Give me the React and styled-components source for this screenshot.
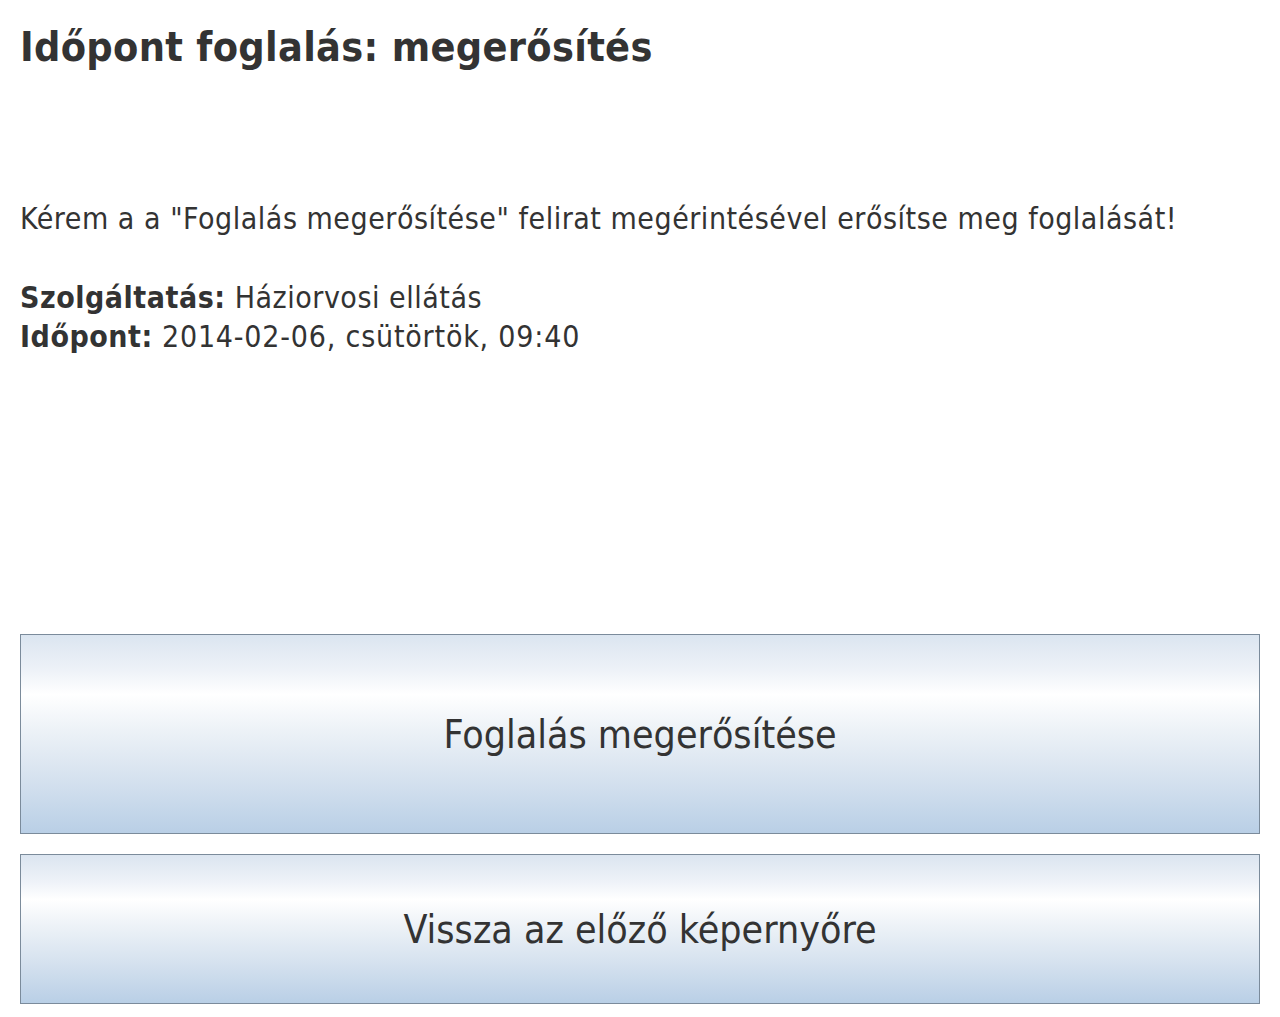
import React from 'react';
import styled, { createGlobalStyle } from 'styled-components';

const GlobalStyle = createGlobalStyle`
    html, body {
        margin: 0;
        padding: 0;
        background: #fff;
    }
    body {
        font-family: Tahoma, "DejaVu Sans", Verdana, sans-serif;
        font-stretch: condensed;
        color: #333;
    }
`;

const booking = {
    service: 'Háziorvosi ellátás',
    time: '2014-02-06, csütörtök, 09:40',
};

const App = () => {
    return (
        <Page>
            <GlobalStyle />
            <Title>Időpont foglalás: megerősítés</Title>
            <Intro>Kérem a a "Foglalás megerősítése" felirat megérintésével erősítse meg foglalását!</Intro>
            <Details>
                <DetailRow><Label>Szolgáltatás:</Label> {booking.service}</DetailRow>
                <DetailRow><Label>Időpont:</Label> <Value>{booking.time}</Value></DetailRow>
            </Details>
            <Actions>
                <BigButton tall>Foglalás megerősítése</BigButton>
                <BigButton>Vissza az előző képernyőre</BigButton>
            </Actions>
        </Page>
    );
};

export default App;

const Page = styled.div`
    display: flex;
    flex-direction: column;
    box-sizing: border-box;
    height: 100vh;
    padding: 20px 20px 13px;
`;

const Title = styled.h1`
    margin: 0;
    font-size: 41px;
    line-height: 54px;
    letter-spacing: 0.3px;
    font-weight: bold;
`;

const Intro = styled.p`
    margin: 125px 0 0;
    font-size: 30px;
    line-height: 39px;
    letter-spacing: 0.52px;
`;

const Details = styled.div`
    margin-top: 40px;
`;

const DetailRow = styled.div`
    font-size: 30px;
    line-height: 39px;
    letter-spacing: 0.52px;
`;

const Label = styled.b`
    font-weight: bold;
`;

const Value = styled.span`
    letter-spacing: 0.8px;
`;

const Actions = styled.div`
    margin-top: auto;
    display: flex;
    flex-direction: column;
    gap: 20px;
`;

const BigButton = styled.button`
    display: flex;
    align-items: center;
    justify-content: center;
    width: 100%;
    height: ${({ tall }) => (tall ? '200px' : '150px')};
    border: 1px solid #7b8b9b;
    border-radius: 0;
    background: linear-gradient(to bottom, #dbe5f0 0%, #eef2f8 18%, #ffffff 30%, #edf2f7 48%, #d6e2ef 72%, #b9cfe6 100%);
    font-family: inherit;
    font-stretch: condensed;
    font-size: 39px;
    color: #333;
    padding: 0;
    cursor: pointer;
`;
